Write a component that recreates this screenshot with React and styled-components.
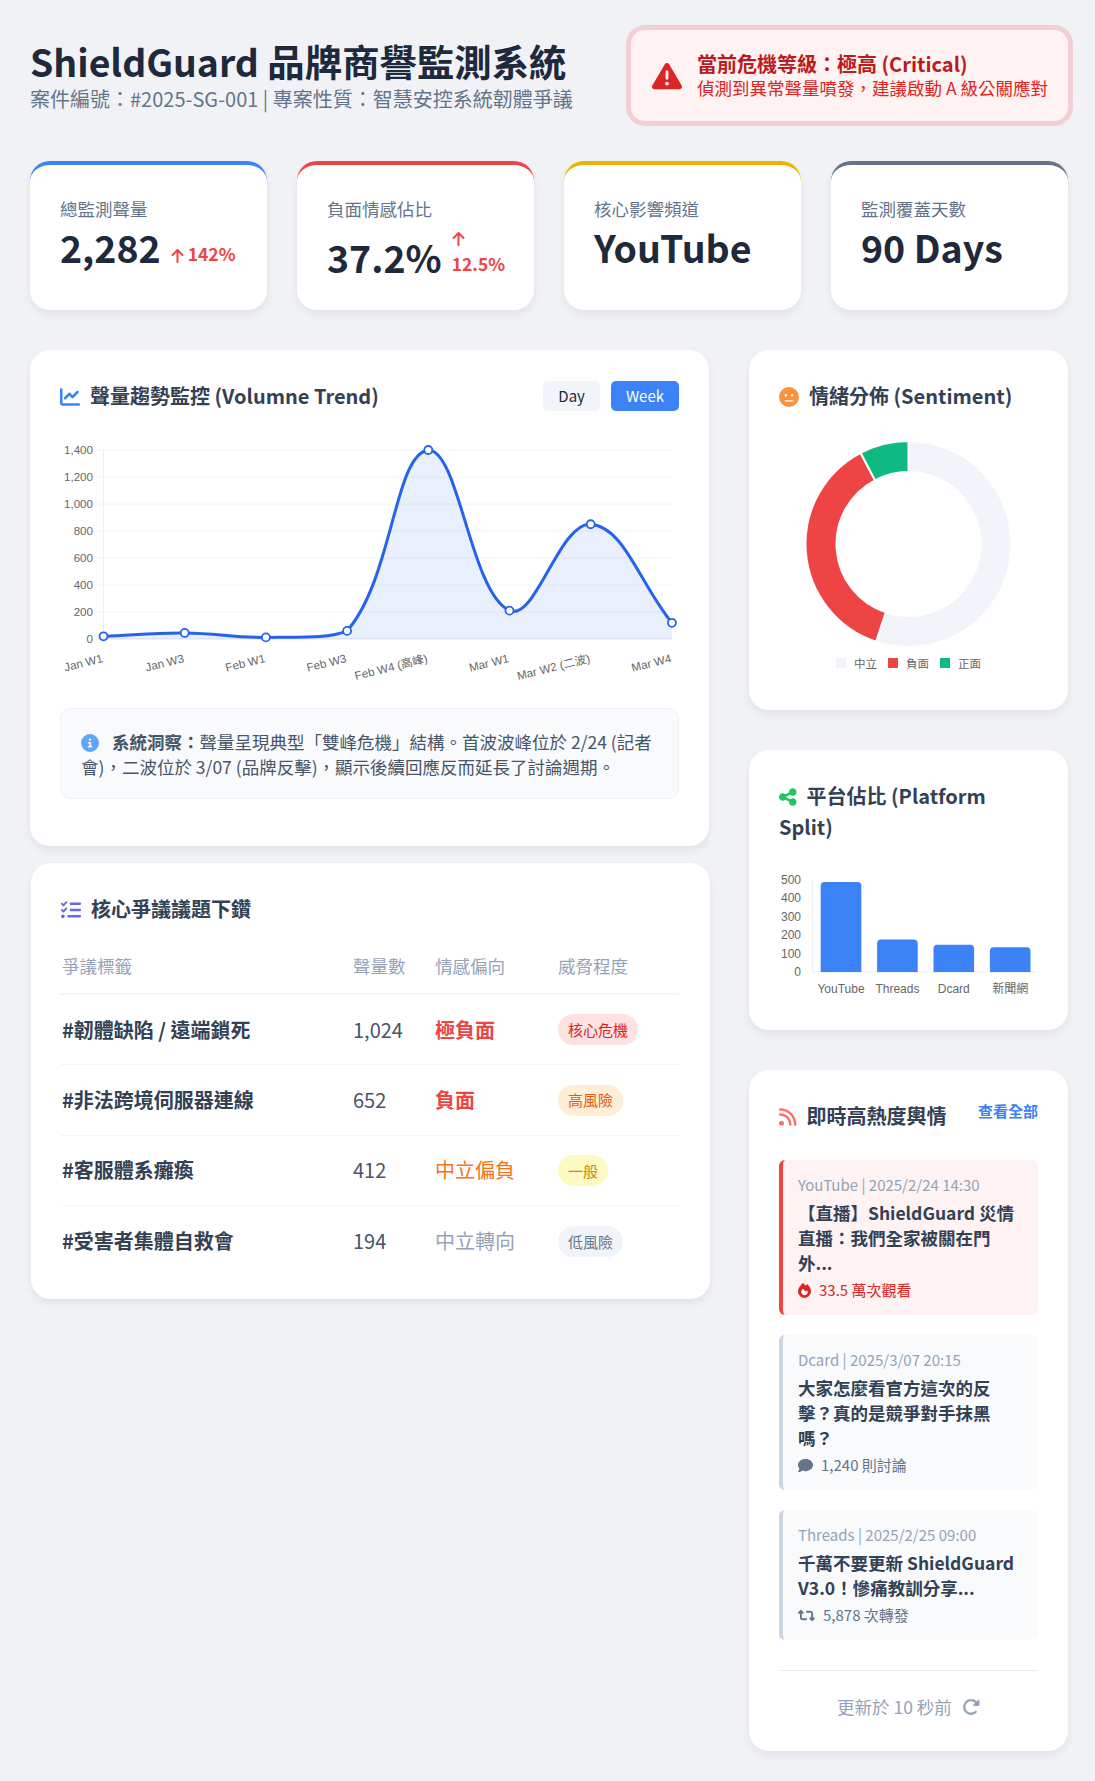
import React from 'react';
import styled, { createGlobalStyle } from 'styled-components';
import {
  FaArrowUp, FaChartLine, FaComment, FaCircleInfo, FaFaceMeh, FaFire, FaListCheck,
  FaRotateRight, FaRetweet, FaRss, FaShareNodes, FaTriangleExclamation,
} from 'react-icons/fa6';

const GlobalStyle = createGlobalStyle`
  * { box-sizing: border-box; }
  body {
    margin: 0;
    background: #f0f2f6;
    color: #1e293b;
    font-family: "Noto Sans CJK TC", "Noto Sans", sans-serif;
    line-height: 1.6;
  }
`;

const Page = styled.div`
  width: 1095px;
  padding: 30px 27px 30px 30px;
`;

const Header = styled.header`
  display: flex;
  justify-content: space-between;
  align-items: center;
  margin-bottom: 40px;
`;

const Title = styled.h1`
  margin: 0;
  font-size: 37.4px;
  line-height: 44px;
  font-weight: 700;
  color: #1e293b;
`;

const Subtitle = styled.p`
  margin: 2px 0 0;
  font-size: 20px;
  line-height: 28px;
  color: #64748b;
`;

const Alert = styled.div`
  display: flex;
  align-items: center;
  gap: 15px;
  width: 437px;
  height: 91px;
  padding: 0 20px 0 21px;
  background: #fef2f2;
  border-radius: 14px;
  box-shadow: 0 0 0 5px #f2cfd3;
  svg { font-size: 30px; color: #dc2626; flex: none; }
`;

const AlertTitle = styled.div`
  font-size: 20px;
  line-height: 25px;
  font-weight: 700;
  color: #b91c1c;
`;

const AlertText = styled.div`
  font-size: 17.5px;
  line-height: 24px;
  color: #dc2626;
  white-space: nowrap;
`;

const KpiGrid = styled.section`
  display: grid;
  grid-template-columns: repeat(4, minmax(0, 1fr));
  gap: 30px;
  margin-bottom: 40px;
`;

const KpiCard = styled.div`
  padding: 30px;
  background: #fff;
  border-top: 4px solid ${(p) => p.$color};
  border-radius: 20px;
  box-shadow: 0 4px 8px rgba(15, 23, 42, 0.07);
`;

const KpiLabel = styled.div`
  font-size: 17.5px;
  line-height: 28px;
  color: #64748b;
`;

const KpiValue = styled.div`
  display: flex;
  align-items: flex-end;
  gap: 10px;
  font-size: 37.5px;
  line-height: 47px;
  font-weight: 700;
  color: #1e293b;
`;

const Delta = styled.span`
  flex: 1 1 0;
  margin-bottom: 3px;
  font-size: 17.5px;
  line-height: 27px;
  font-weight: 700;
  color: #ef4444;
  svg { width: 13px; height: 16px; margin-right: 4px; vertical-align: -3px; }
`;

const MainGrid = styled.div`
  display: grid;
  grid-template-columns: 679px 319px;
  gap: 40px;
  align-items: start;
`;

const Column = styled.div`
  display: flex;
  flex-direction: column;
  gap: ${(p) => p.$gap}px;
`;

const Card = styled.section`
  padding: 30px 30px ${(p) => p.$bottom ?? 30}px;
  margin-left: ${(p) => p.$nudge ?? 0}px;
  margin-right: ${(p) => -(p.$nudge ?? 0)}px;
  background: #fff;
  border-radius: 20px;
  box-shadow: 0 4px 8px rgba(15, 23, 42, 0.07);
`;

const CardHead = styled.div`
  display: flex;
  justify-content: space-between;
  align-items: ${(p) => p.$align ?? 'center'};
  margin-bottom: ${(p) => p.$mb ?? 0}px;
`;

const CardTitle = styled.h2`
  margin: 0;
  font-size: 20px;
  line-height: ${(p) => p.$lh ?? 32}px;
  font-weight: 700;
  color: #334155;
  svg {
    color: ${(p) => p.$icon};
    width: ${(p) => p.$iconW ?? 20}px;
    height: 20px;
    margin-right: 10px;
    vertical-align: -3px;
  }
`;

const Toggle = styled.div`
  display: flex;
  gap: 11px;
`;

const ToggleButton = styled.div`
  height: 30px;
  padding: 0 15px;
  border-radius: 5px;
  font-size: 15px;
  line-height: 30px;
  background: ${(p) => (p.$active ? '#3b82f6' : '#f1f5f9')};
  color: ${(p) => (p.$active ? '#fff' : '#1e293b')};
`;

const ChartSvg = styled.svg`
  display: block;
`;

const AxisText = styled.text`
  font-family: "Liberation Sans", "Noto Sans CJK TC", sans-serif;
  font-size: ${(p) => p.$size ?? 12}px;
  fill: #666;
`;

const Insight = styled.div`
  margin-top: 16px;
  padding: 20px;
  height: 91px;
  background: #f8fafc;
  border: 1px solid #edf1f6;
  border-radius: 10px;
  font-size: 17.5px;
  line-height: 25px;
  color: #475569;
  strong { font-weight: 700; color: #475569; }
  svg { color: #60a5fa; font-size: 18px; margin-right: 13px; vertical-align: -3px; }
`;

const Table = styled.table`
  width: 618px;
  margin-top: 13px;
  border-collapse: collapse;
  table-layout: fixed;
`;

const Th = styled.th`
  width: ${(p) => p.$w}px;
  padding: 14px 0 13px 1px;
  border-bottom: 2px solid #f1f5f9;
  font-size: 17.5px;
  line-height: 28px;
  font-weight: 400;
  text-align: left;
  color: #94a3b8;
`;

const Tr = styled.tr`
  & + & td { border-top: 1px solid #f1f5f9; }
`;

const Td = styled.td`
  height: 70.6px;
  padding: 0 0 0 1px;
  font-size: 20px;
  line-height: 28px;
  color: ${(p) => p.$color ?? '#475569'};
  font-weight: ${(p) => (p.$bold ? 700 : 400)};
`;

const Badge = styled.span`
  display: inline-block;
  padding: 3.5px 10px;
  border-radius: 16px;
  font-size: 15px;
  line-height: 24px;
  background: ${(p) => p.$bg};
  color: ${(p) => p.$color};
`;

const FeedLink = styled.span`
  font-size: 15px;
  line-height: 22px;
  font-weight: 700;
  color: #3b82f6;
`;

const FeedList = styled.div`
  display: flex;
  flex-direction: column;
  gap: 20px;
`;

const FeedItem = styled.article`
  padding: 12px 20px 13px 15px;
  border-left: 4.5px solid ${(p) => (p.$hot ? '#ef4444' : '#cbd5e1')};
  border-radius: 6px;
  background: ${(p) => (p.$hot ? '#fef2f2' : '#f8fafc')};
`;

const FeedMeta = styled.div`
  font-size: 15px;
  line-height: 25px;
  color: #94a3b8;
`;

const FeedTitle = styled.div`
  margin: 3px 0 2px;
  font-size: 17.5px;
  line-height: 25px;
  font-weight: 700;
  color: #334155;
`;

const FeedStat = styled.div`
  font-size: 15px;
  line-height: 25px;
  color: ${(p) => (p.$hot ? '#dc2626' : '#64748b')};
  svg { width: ${(p) => p.$iconW}px; height: 15px; margin-right: 8px; vertical-align: -2px; }
`;

const FeedFooter = styled.div`
  margin-top: 30px;
  padding-top: 22px;
  border-top: 1px solid #e9edf2;
  font-size: 17.5px;
  line-height: 28px;
  text-align: center;
  color: #94a3b8;
  svg { font-size: 18px; margin-left: 10px; vertical-align: -2px; color: #94a3b8; }
`;

const trendData = [
  { label: 'Jan W1', value: 20 },
  { label: 'Jan W3', value: 45 },
  { label: 'Feb W1', value: 12 },
  { label: 'Feb W3', value: 60 },
  { label: 'Feb W4 (高峰)', value: 1400 },
  { label: 'Mar W1', value: 210 },
  { label: 'Mar W2 (二波)', value: 850 },
  { label: 'Mar W4', value: 120 },
];

const splineX = (i) => 43.5 + i * 81.2;
const splineY = (v) => 227 - v * 0.135;
const capY = (y) => Math.min(227, Math.max(38, y));

// same curve as a tension 0.4 line chart, control points capped to the plot area
function splinePath(points) {
  const t = 0.4;
  const ctrl = points.map((p, i) => {
    const a = points[i - 1] ?? p;
    const b = points[i + 1] ?? p;
    const d1 = Math.hypot(p.x - a.x, p.y - a.y);
    const d2 = Math.hypot(b.x - p.x, b.y - p.y);
    const sum = d1 + d2 || 1;
    return {
      px: p.x - (t * d1 / sum) * (b.x - a.x),
      py: capY(p.y - (t * d1 / sum) * (b.y - a.y)),
      nx: p.x + (t * d2 / sum) * (b.x - a.x),
      ny: capY(p.y + (t * d2 / sum) * (b.y - a.y)),
    };
  });
  return points.reduce((d, p, i) => {
    if (i === 0) return `M${p.x} ${p.y}`;
    const c0 = ctrl[i - 1];
    const c1 = ctrl[i];
    return `${d} C${c0.nx} ${c0.ny} ${c1.px} ${c1.py} ${p.x} ${p.y}`;
  }, '');
}

function TrendChart() {
  const points = trendData.map((d, i) => ({ x: splineX(i), y: splineY(d.value) }));
  const line = splinePath(points);
  const ticks = [0, 200, 400, 600, 800, 1000, 1200, 1400];
  return (
    <ChartSvg width="618" height="280" viewBox="0 0 618 280">
      {ticks.map((v) => (
        <g key={v}>
          <line x1="36" x2="612" y1={splineY(v)} y2={splineY(v)} stroke={v === 0 ? '#e2e5ea' : '#f3f4f6'} />
          <AxisText $size="11.6" x="33" y={splineY(v) + 4} textAnchor="end">{v.toLocaleString('en-US')}</AxisText>
        </g>
      ))}
      <line x1="43.5" x2="43.5" y1="38" y2="227" stroke="#eceef1" />
      <path d={`${line} L612 227 L43.5 227 Z`} fill="rgba(37, 99, 235, 0.1)" />
      <path d={line} fill="none" stroke="#2563eb" strokeWidth="3" />
      {points.map((p) => (
        <circle key={p.x} cx={p.x} cy={p.y} r="4" fill="#fff" stroke="#2563eb" strokeWidth="1.8" />
      ))}
      {trendData.map((d, i) => (
        <AxisText key={d.label} $size="11.6" textAnchor="end" transform={`translate(${splineX(i)} 250) rotate(-14)`}>
          {d.label}
        </AxisText>
      ))}
    </ChartSvg>
  );
}

function polar(cx, cy, r, deg) {
  const a = ((deg - 90) * Math.PI) / 180;
  return [cx + r * Math.cos(a), cy + r * Math.sin(a)];
}

function ringPath(cx, cy, R, r, from, to) {
  const large = to - from > 180 ? 1 : 0;
  const [x0, y0] = polar(cx, cy, R, from);
  const [x1, y1] = polar(cx, cy, R, to);
  const [x2, y2] = polar(cx, cy, r, to);
  const [x3, y3] = polar(cx, cy, r, from);
  return `M${x0} ${y0} A${R} ${R} 0 ${large} 1 ${x1} ${y1} L${x2} ${y2} A${r} ${r} 0 ${large} 0 ${x3} ${y3} Z`;
}

const sentiment = [
  { label: '中立', share: 55.1, color: '#f1f5f9', box: 57 },
  { label: '負面', share: 37.2, color: '#ef4444', box: 109 },
  { label: '正面', share: 7.7, color: '#10b981', box: 161 },
];

function SentimentChart() {
  let angle = 0;
  return (
    <ChartSvg width="259" height="268" viewBox="0 0 259 268">
      {sentiment.map((s) => {
        const from = angle;
        angle += s.share * 3.6;
        return (
          <path key={s.label} d={ringPath(129.5, 132, 103, 72, from, angle)} fill={s.color} stroke="#fff" strokeWidth="2" />
        );
      })}
      {sentiment.map((s) => (
        <g key={s.label}>
          <rect x={s.box} y="246" width="10" height="10" fill={s.color} />
          <AxisText x={s.box + 18} y="255.5" $size="11.5">{s.label}</AxisText>
        </g>
      ))}
    </ChartSvg>
  );
}

const platforms = [
  { label: 'YouTube', value: 489 },
  { label: 'Threads', value: 176 },
  { label: 'Dcard', value: 148 },
  { label: '新聞網', value: 135 },
];

function PlatformChart() {
  const base = 130;
  const ticks = [0, 100, 200, 300, 400, 500];
  return (
    <ChartSvg width="259" height="158" viewBox="0 0 259 158">
      {ticks.map((v) => (
        <AxisText key={v} x="22" y={base - v * 0.184 + 4} textAnchor="end">{v}</AxisText>
      ))}
      <line x1="33.7" x2="33.7" y1="38" y2={base} stroke="#eceef1" />
      <line x1="33.7" x2="259" y1={base} y2={base} stroke="#eceef1" />
      {platforms.map((p, i) => {
        const h = p.value * 0.184;
        const x = 41.7 + i * 56.4;
        return (
          <g key={p.label}>
            <path
              d={`M${x} ${base} V${base - h + 4} Q${x} ${base - h} ${x + 4} ${base - h} H${x + 36.6} Q${x + 40.6} ${base - h} ${x + 40.6} ${base - h + 4} V${base} Z`}
              fill="#3b82f6"
            />
            <AxisText x={x + 20.3} y="151" textAnchor="middle">{p.label}</AxisText>
          </g>
        );
      })}
    </ChartSvg>
  );
}

const kpis = [
  { label: '總監測聲量', value: '2,282', delta: '142%', color: '#3b82f6' },
  { label: '負面情感佔比', value: '37.2%', delta: '12.5%', color: '#ef4444' },
  { label: '核心影響頻道', value: 'YouTube', color: '#eab308' },
  { label: '監測覆蓋天數', value: '90 Days', color: '#64748b' },
];

const issues = [
  { tag: '#韌體缺陷 / 遠端鎖死', count: '1,024', tone: '極負面', toneColor: '#ef4444', toneBold: true, badge: '核心危機', bg: '#fee2e2', fg: '#dc2626' },
  { tag: '#非法跨境伺服器連線', count: '652', tone: '負面', toneColor: '#ef4444', toneBold: true, badge: '高風險', bg: '#ffedd5', fg: '#ea580c' },
  { tag: '#客服體系癱瘓', count: '412', tone: '中立偏負', toneColor: '#f97316', badge: '一般', bg: '#fef9c3', fg: '#ca8a04' },
  { tag: '#受害者集體自救會', count: '194', tone: '中立轉向', toneColor: '#94a3b8', badge: '低風險', bg: '#f1f5f9', fg: '#64748b' },
];

const feed = [
  { meta: 'YouTube | 2025/2/24 14:30', title: '【直播】ShieldGuard 災情直播：我們全家被關在門外...', Icon: FaFire, iconW: 13, stat: '33.5 萬次觀看', hot: true },
  { meta: 'Dcard | 2025/3/07 20:15', title: '大家怎麼看官方這次的反擊？真的是競爭對手抹黑嗎？', Icon: FaComment, iconW: 15, stat: '1,240 則討論' },
  { meta: 'Threads | 2025/2/25 09:00', title: '千萬不要更新 ShieldGuard V3.0！慘痛教訓分享...', Icon: FaRetweet, iconW: 17, stat: '5,878 次轉發' },
];

export default function App() {
  return (
    <Page>
      <GlobalStyle />
      <Header>
        <div>
          <Title>ShieldGuard 品牌商譽監測系統</Title>
          <Subtitle>案件編號：#2025-SG-001 | 專案性質：智慧安控系統韌體爭議</Subtitle>
        </div>
        <Alert>
          <FaTriangleExclamation />
          <div>
            <AlertTitle>當前危機等級：極高 (Critical)</AlertTitle>
            <AlertText>偵測到異常聲量噴發，建議啟動 A 級公關應對</AlertText>
          </div>
        </Alert>
      </Header>

      <KpiGrid>
        {kpis.map((k) => (
          <KpiCard key={k.label} $color={k.color}>
            <KpiLabel>{k.label}</KpiLabel>
            <KpiValue>
              <span>{k.value}</span>
              {k.delta && <Delta><FaArrowUp />{k.delta}</Delta>}
            </KpiValue>
          </KpiCard>
        ))}
      </KpiGrid>

      <MainGrid>
        <Column $gap={17}>
          <Card $bottom={47}>
            <CardHead>
              <CardTitle $icon="#3b82f6"><FaChartLine />聲量趨勢監控 (Volumne Trend)</CardTitle>
              <Toggle>
                <ToggleButton>Day</ToggleButton>
                <ToggleButton $active>Week</ToggleButton>
              </Toggle>
            </CardHead>
            <TrendChart />
            <Insight>
              <FaCircleInfo />
              <strong>系統洞察：</strong>聲量呈現典型「雙峰危機」結構。首波波峰位於 2/24 (記者會)，二波位於 3/07 (品牌反擊)，顯示後續回應反而延長了討論週期。
            </Insight>
          </Card>

          <Card $bottom={23} $nudge={1}>
            <CardTitle $icon="#6366f1"><FaListCheck />核心爭議議題下鑽</CardTitle>
            <Table>
              <thead>
                <tr>
                  <Th $w={291}>爭議標籤</Th>
                  <Th $w={82}>聲量數</Th>
                  <Th $w={123}>情感偏向</Th>
                  <Th>威脅程度</Th>
                </tr>
              </thead>
              <tbody>
                {issues.map((row) => (
                  <Tr key={row.tag}>
                    <Td $bold $color="#334155">{row.tag}</Td>
                    <Td>{row.count}</Td>
                    <Td $color={row.toneColor} $bold={row.toneBold}>{row.tone}</Td>
                    <Td><Badge $bg={row.bg} $color={row.fg}>{row.badge}</Badge></Td>
                  </Tr>
                ))}
              </tbody>
            </Table>
          </Card>
        </Column>

        <Column $gap={40}>
          <Card>
            <CardTitle $icon="#fb923c"><FaFaceMeh />情緒分佈 (Sentiment)</CardTitle>
            <SentimentChart />
          </Card>

          <Card>
            <CardTitle $icon="#22c55e" $iconW={17.5} $lh={31}><FaShareNodes />平台佔比 (Platform Split)</CardTitle>
            <PlatformChart />
          </Card>

          <Card>
            <CardHead $align="flex-start" $mb={28}>
              <CardTitle $icon="#f87171" $iconW={17.5}><FaRss />即時高熱度輿情</CardTitle>
              <FeedLink>查看全部</FeedLink>
            </CardHead>
            <FeedList>
              {feed.map((item) => (
                <FeedItem key={item.meta} $hot={item.hot}>
                  <FeedMeta>{item.meta}</FeedMeta>
                  <FeedTitle>{item.title}</FeedTitle>
                  <FeedStat $hot={item.hot} $iconW={item.iconW}><item.Icon />{item.stat}</FeedStat>
                </FeedItem>
              ))}
            </FeedList>
            <FeedFooter>更新於 10 秒前<FaRotateRight /></FeedFooter>
          </Card>
        </Column>
      </MainGrid>
    </Page>
  );
}
